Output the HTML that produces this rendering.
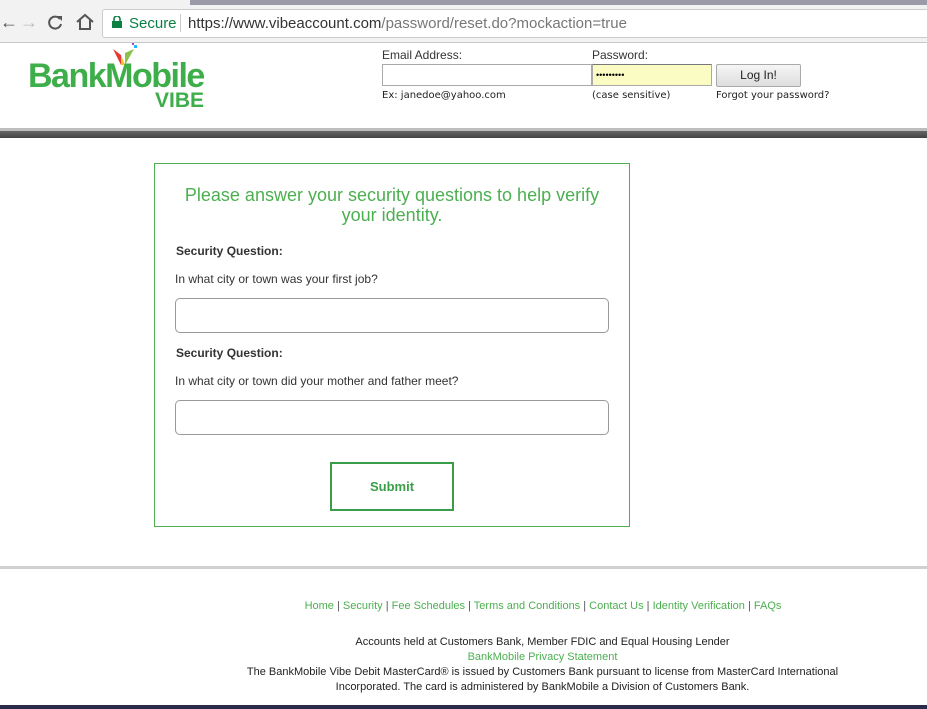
<!DOCTYPE html>
<html><head><style>
body{margin:0;width:927px;height:709px;position:relative;overflow:hidden;background:#fff;font-family:"Liberation Sans",Arial,sans-serif}
.a{position:absolute}
.g{color:#4caf50}
</style></head><body>
<div class="a" style="left:0;top:0;width:927px;height:42px;background:#f2f2f2;border-bottom:1px solid #c8c8c8"></div>
<div class="a" style="left:190px;top:0;width:737px;height:5px;background:#9a9aa8"></div>
<div class="a" style="left:0;top:12px;font-size:18px;color:#555">&#8592;</div>
<div class="a" style="left:20px;top:12px;font-size:18px;color:#bbb">&#8594;</div>
<svg class="a" style="left:46px;top:14px" width="18" height="18" viewBox="0 0 18 18"><path d="M14 5A6 6 0 1 0 15 10" fill="none" stroke="#555" stroke-width="2"/><path d="M11 2h5v5z" fill="#555"/></svg>
<svg class="a" style="left:75px;top:13px" width="20" height="18" viewBox="0 0 20 18"><path d="M2 9L10 2l8 7M5 7v9h10V7" fill="none" stroke="#555" stroke-width="2"/></svg>
<div class="a" style="left:102px;top:9px;width:830px;height:27px;background:#fff;border:1px solid #ccc;border-radius:3px"></div>
<svg class="a" style="left:112px;top:16px" width="10" height="12" viewBox="0 0 10 12"><rect x="0" y="5" width="10" height="7" fill="#0b8043"/><path d="M2 5V3a3 3 0 0 1 6 0v2" fill="none" stroke="#0b8043" stroke-width="1.6"/></svg>
<div class="a" style="left:129px;top:15px;font-size:15px;color:#0b8043">Secure</div>
<div class="a" style="left:180px;top:14px;width:1px;height:18px;background:#ccc"></div>
<div class="a" style="left:188px;top:15px;font-size:15px;color:#333">https://www.vibeaccount.com<span style="color:#777">/password/reset.do?mockaction=true</span></div>

<svg class="a" style="left:110px;top:43px" width="30" height="26" viewBox="0 0 30 26"><path d="M3 6l8 6 0 10z" fill="#e53935"/><path d="M11 12l4 10-4 0z" fill="#fbc02d"/><path d="M15 22l9-16-9 4z" fill="#8bc34a"/><rect x="24" y="2" width="3" height="3" fill="#29b6f6"/><rect x="22" y="0" width="2" height="2" fill="#ab47bc"/></svg>
<div class="a" style="left:28px;top:57px;font-size:34px;font-weight:bold;color:#3dae49;letter-spacing:-1.5px">BankMobile</div>
<div class="a" style="left:155px;top:89px;font-size:21px;font-weight:bold;color:#3dae49">VIBE</div>

<div class="a" style="left:382px;top:48px;font-size:12px;color:#333">Email Address:</div>
<div class="a" style="left:592px;top:48px;font-size:12px;color:#333">Password:</div>
<div class="a" style="left:382px;top:64px;width:208px;height:20px;border:1px solid #aaa;background:#fff"></div>
<div class="a" style="left:592px;top:64px;width:115px;height:20px;border:1px solid #aaa;border-top-color:#777;background:#fafcc4;font-size:9px;line-height:20px;padding-left:3px">&#8226;&#8226;&#8226;&#8226;&#8226;&#8226;&#8226;&#8226;&#8226;</div>
<div class="a" style="left:716px;top:64px;width:83px;height:21px;border:1px solid #aaa;border-radius:2px;background:linear-gradient(#f6f6f6,#ddd);font-size:12px;text-align:center;line-height:21px;color:#222">Log In!</div>
<div class="a" style="left:382px;top:90px;font-size:10px;color:#222;font-family:'DejaVu Sans',sans-serif">Ex: janedoe@yahoo.com</div>
<div class="a" style="left:592px;top:90px;font-size:10px;color:#222;font-family:'DejaVu Sans',sans-serif">(case sensitive)</div>
<div class="a" style="left:716px;top:90px;font-size:10px;color:#222;font-family:'DejaVu Sans',sans-serif">Forgot your password?</div>

<div class="a" style="left:0;top:128px;width:927px;height:3px;background:#bdbdbd"></div>
<div class="a" style="left:0;top:131px;width:927px;height:7px;background:linear-gradient(#666,#444)"></div>

<div class="a" style="left:154px;top:163px;width:474px;height:362px;border:1px solid #4caf50"></div>
<div class="a g" style="left:172px;top:185px;width:440px;text-align:center;font-size:18px;line-height:20px">Please answer your security questions to help verify your identity.</div>
<div class="a" style="left:176px;top:244px;font-size:12px;font-weight:bold;color:#333">Security Question:</div>
<div class="a" style="left:175px;top:272px;font-size:12px;color:#333">In what city or town was your first job?</div>
<div class="a" style="left:175px;top:298px;width:432px;height:33px;border:1px solid #999;border-radius:5px"></div>
<div class="a" style="left:176px;top:346px;font-size:12px;font-weight:bold;color:#333">Security Question:</div>
<div class="a" style="left:175px;top:374px;font-size:12px;color:#333">In what city or town did your mother and father meet?</div>
<div class="a" style="left:175px;top:400px;width:432px;height:33px;border:1px solid #999;border-radius:5px"></div>
<div class="a" style="left:330px;top:462px;width:120px;height:45px;border:2px solid #3a9e48;font-size:13px;font-weight:bold;color:#3a9e48;text-align:center;line-height:45px">Submit</div>

<div class="a" style="left:0;top:566px;width:927px;height:3px;background:#d0d0d0"></div>
<div class="a" style="left:0;top:600px;width:1086px;text-align:center;font-size:11px;color:#555"><span class="g">Home</span> | <span class="g">Security</span> | <span class="g">Fee Schedules</span> | <span class="g">Terms and Conditions</span> | <span class="g">Contact Us</span> | <span class="g">Identity Verification</span> | <span class="g">FAQs</span></div>
<div class="a" style="left:240px;top:635px;width:605px;text-align:center;font-size:11px;line-height:15px;color:#222">Accounts held at Customers Bank, Member FDIC and Equal Housing Lender<br><span class="g">BankMobile Privacy Statement</span><br>The BankMobile Vibe Debit MasterCard® is issued by Customers Bank pursuant to license from MasterCard International Incorporated. The card is administered by BankMobile a Division of Customers Bank.</div>
<div class="a" style="left:0;top:705px;width:927px;height:4px;background:#2a2a4a"></div>
</body></html>
